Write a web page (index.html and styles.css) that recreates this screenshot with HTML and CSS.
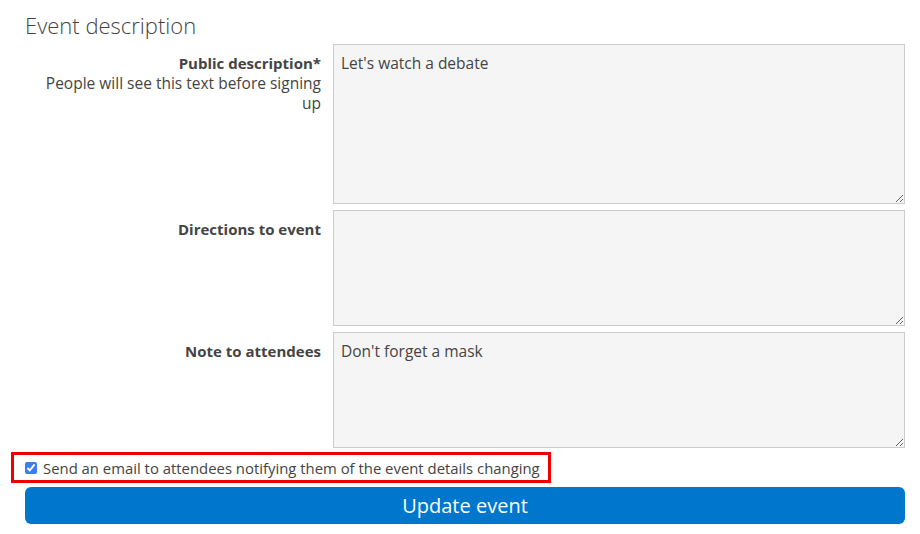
FILE: index.html
```html
<!DOCTYPE html>
<html lang="en">
<head>
<meta charset="utf-8">
<title>Event description</title>
<link rel="stylesheet" href="styles.css">
</head>
<body>
<form class="event-form">
  <h2 class="section-title">Event description</h2>
  <div class="rows">
    <div class="row">
      <label class="row-label" for="pub"><strong>Public description*</strong><br><span class="hint">People will see this text before signing up</span></label>
      <textarea id="pub" class="field field-tall">Let's watch a debate</textarea>
    </div>
    <div class="row">
      <label class="row-label" for="dir"><strong>Directions to event</strong></label>
      <textarea id="dir" class="field"></textarea>
    </div>
    <div class="row">
      <label class="row-label" for="note"><strong>Note to attendees</strong></label>
      <textarea id="note" class="field">Don't forget a mask</textarea>
    </div>
  </div>
  <label class="notify"><input type="checkbox" class="notify-box" checked><span>Send an email to attendees notifying them of the event details changing</span></label>
  <button type="button" class="submit">Update event</button>
</form>
</body>
</html>
```

FILE: styles.css
```css
html, body {
  margin: 0;
  padding: 0;
  background: #fff;
}
body {
  font-family: "Open Sans", "DejaVu Sans", sans-serif;
  font-size: 15px;
  line-height: 20px;
  color: #444;
}
.event-form {
  padding: 11px 15px 0 25px;
  display: flex;
  flex-direction: column;
  align-items: flex-start;
}
.section-title {
  margin: 0 0 5px;
  font-size: 22px;
  line-height: 28px;
  font-weight: 300;
  color: #444;
}
.rows {
  align-self: stretch;
  display: flex;
  flex-direction: column;
  gap: 6px;
}
.row {
  display: flex;
  gap: 12px;
}
.row-label {
  box-sizing: border-box;
  width: 296px;
  flex: none;
  padding: 9px 0 0 12px;
  text-align: right;
  color: #444;
}
.row-label strong {
  font-weight: 700;
}
.hint {
  font-size: 15.5px;
}
.field {
  flex: 1;
  box-sizing: border-box;
  height: 116px;
  margin: 0;
  padding: 8px 7px;
  border: 1px solid #cccccc;
  border-radius: 0;
  background: #f5f5f5;
  font-family: inherit;
  font-size: 15.5px;
  line-height: 20px;
  color: #444;
  resize: vertical;
}
.field-tall {
  height: 160px;
}
.notify {
  margin: 4px 0 0 -14px;
  padding: 0 8px 0 11px;
  height: 25px;
  border: 3px solid #ee0000;
  display: inline-flex;
  align-items: center;
  gap: 6px;
  font-size: 14.88px;
  color: #444;
}
.notify-box {
  width: 12px;
  height: 12px;
  margin: 0;
  accent-color: #3b7cf4;
}
.submit {
  align-self: stretch;
  margin-top: 4px;
  height: 37px;
  border: 0;
  border-radius: 6px;
  background: #0077cc;
  color: #fff;
  font-family: inherit;
  font-size: 20px;
  font-weight: 400;
  line-height: 28px;
  padding: 0;
}
```
